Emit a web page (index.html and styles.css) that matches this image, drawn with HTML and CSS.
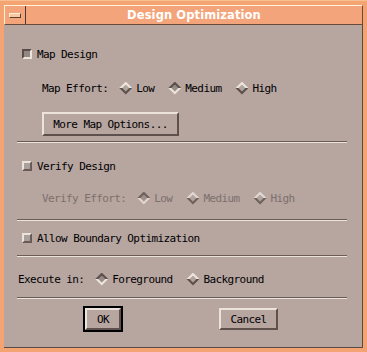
FILE: index.html
```html
<!doctype html>
<html lang="en">
<head>
    <meta charset="UTF-8">
    <title>Design Optimization</title>
    <link rel="stylesheet" href="styles.css">
</head>
<body>
    <div class="window">
        <div class="titlebar">
            <div class="menu-btn"><span class="menu-bar"></span></div>
            <div class="title">Design Optimization</div>
        </div>
        <div class="client">
            <div class="row check-row first">
                <span class="check checked"></span>Map Design
            </div>
            <div class="row radio-row indent effort-row">
                <span class="radio-label">Map Effort:</span>
                <span class="radio"><span class="diamond"></span>Low</span>
                <span class="radio"><span class="diamond on"></span>Medium</span>
                <span class="radio"><span class="diamond"></span>High</span>
            </div>
            <div class="indent">
                <button class="push more-btn">More Map Options...</button>
            </div>
            <div class="sep sep1"></div>

            <div class="row check-row verify">
                <span class="check"></span>Verify Design
            </div>
            <div class="row radio-row indent effort-row insensitive">
                <span class="radio-label">Verify Effort:</span>
                <span class="radio"><span class="diamond on"></span>Low</span>
                <span class="radio"><span class="diamond"></span>Medium</span>
                <span class="radio"><span class="diamond"></span>High</span>
            </div>
            <div class="sep sep2"></div>

            <div class="row check-row allow">
                <span class="check"></span>Allow Boundary Optimization
            </div>
            <div class="sep sep3"></div>

            <div class="row radio-row execute">
                <span class="radio-label">Execute in:</span>
                <span class="radio"><span class="diamond on"></span>Foreground</span>
                <span class="radio"><span class="diamond"></span>Background</span>
            </div>
            <div class="sep sep4"></div>

            <div class="actions">
                <div class="default-ring"><button class="push ok-btn">OK</button></div>
                <button class="push cancel-btn">Cancel</button>
            </div>
        </div>
    </div>
</body>
</html>
```

FILE: styles.css
```css
body {
    margin: 0;
    background: #f3a472;
}

.window {
    width: 367px;
    height: 352px;
    box-sizing: border-box;
    padding: 4px;
    background: #f3a472;
    border-top: 1px solid #f8c090;
    display: flex;
    flex-direction: column;
    font-family: "DejaVu Sans Mono", "Liberation Mono", monospace;
    font-size: 11px;
    letter-spacing: -0.6px;
    color: #000000;
}

.titlebar {
    height: 20px;
    display: flex;
    background: #f4a47a;
    border-top: 1px solid #fff0d8;
    border-left: 1px solid #fff0d8;
    border-bottom: 1px solid #6a4a38;
    border-right: 1px solid #6a4a38;
    box-sizing: border-box;
}

.menu-btn {
    width: 20px;
    border-right: 1px solid #4a3a30;
    display: flex;
    align-items: center;
    justify-content: center;
}

.menu-bar {
    width: 10px;
    height: 3px;
    background: #f8c8a0;
    border: 1px solid #5a4030;
    border-top-color: #fff0d8;
    border-left-color: #fff0d8;
}

.title {
    flex: 1;
    text-align: center;
    font-family: "DejaVu Sans", "Liberation Sans", sans-serif;
    font-weight: bold;
    font-size: 11.5px;
    letter-spacing: 0.1px;
    line-height: 18px;
    color: #ffffff;
}

.client {
    flex: 1;
    background: #b7a5a0;
    border-right: 1px solid #5a4a44;
    border-bottom: 1px solid #5a4a44;
    padding: 0 14px 0 13px;
}

.row {
    height: 16px;
    display: flex;
    align-items: center;
    white-space: nowrap;
}

.check-row {
    padding-left: 5px;
}

.first { margin-top: 21px; }
.effort-row { margin-top: 18px; }
.verify { margin-top: 15px; }
.verify + .effort-row { margin-top: 16px; }
.allow { margin-top: 9px; }
.execute { margin-top: 14px; padding-left: 1px; }

.indent {
    padding-left: 25px;
}

.check {
    width: 10px;
    height: 10px;
    box-sizing: border-box;
    margin-right: 5px;
    border: 2px solid #6a5a56;
    border-top-color: #ece4dc;
    border-left-color: #ece4dc;
    background: #a8a09c;
}

.check.checked {
    border-color: #ece4dc;
    border-top-color: #5a4c48;
    border-left-color: #5a4c48;
    background: #948884;
}

.radio-label {
    margin-right: 11px;
}

.radio {
    display: flex;
    align-items: center;
    margin-right: 14px;
}

.diamond {
    width: 13px;
    height: 13px;
    margin-right: 4px;
    background:
        linear-gradient(to bottom, #ece4dc 50%, #5e504c 50%);
    clip-path: polygon(50% 0, 100% 50%, 50% 100%, 0 50%);
    position: relative;
}

.diamond::after {
    content: "";
    position: absolute;
    inset: 3px;
    background: #b0a49e;
    clip-path: polygon(50% 0, 100% 50%, 50% 100%, 0 50%);
}

.diamond.on {
    background:
        linear-gradient(to bottom, #5e504c 50%, #ece4dc 50%);
}

.diamond.on::after {
    background: #988c88;
}

.insensitive {
    color: #7c706c;
}

.insensitive .diamond {
    opacity: 0.8;
}

.push {
    font: inherit;
    letter-spacing: inherit;
    color: #000000;
    background: #b7a5a0;
    border: 2px solid #5e504c;
    border-top-color: #ece4dc;
    border-left-color: #ece4dc;
    padding: 0;
    cursor: pointer;
}

.more-btn {
    margin-top: 16px;
    width: 137px;
    height: 24px;
}

.sep {
    height: 0;
    border-top: 1px solid #6a5c58;
    border-bottom: 1px solid #ece4dc;
    margin-right: 1px;
}

.sep1 { margin-top: 5px; }
.sep2 { margin-top: 13px; }
.sep3 { margin-top: 9px; }
.sep4 { margin-top: 10px; }

.actions {
    display: flex;
    align-items: center;
    margin-top: 7px;
    padding-left: 66px;
}

.default-ring {
    border: 2px solid #000000;
    width: 40px;
    height: 26px;
    box-sizing: border-box;
    display: flex;
}

.ok-btn {
    flex: 1;
}

.cancel-btn {
    margin-left: 96px;
    width: 59px;
    height: 22px;
}
```
